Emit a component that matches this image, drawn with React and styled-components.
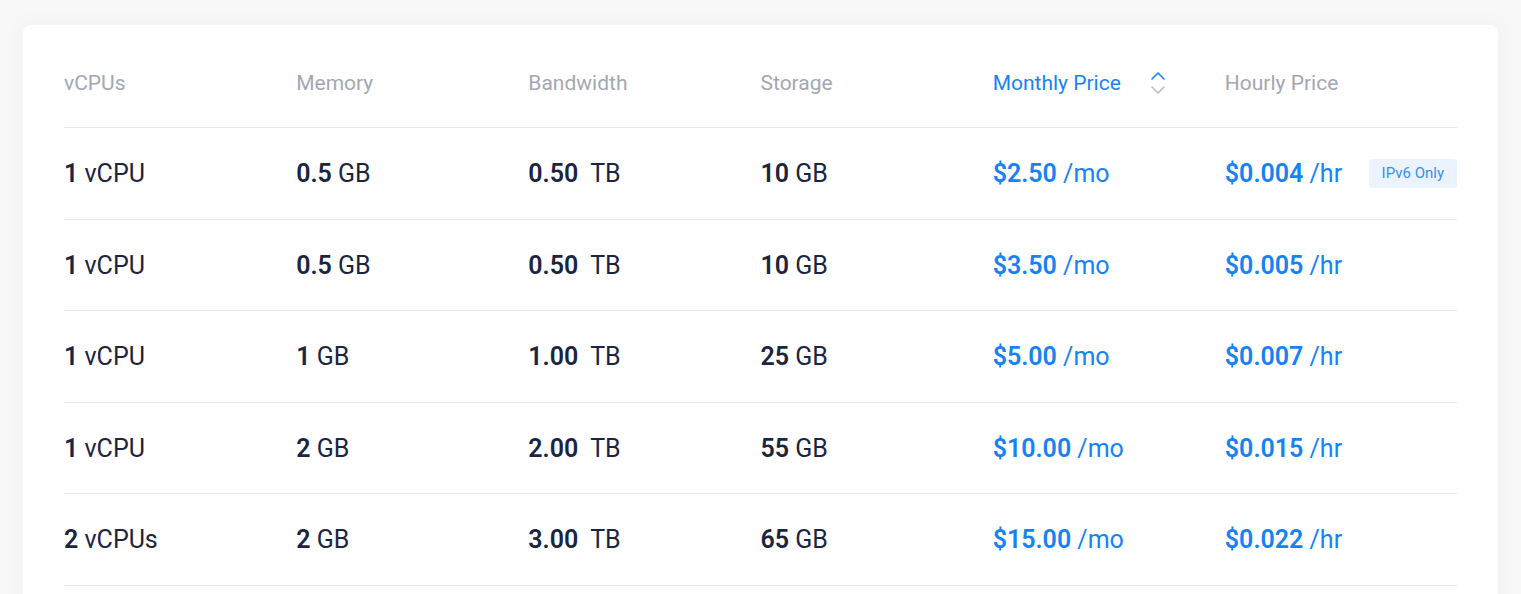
import React from "react";
import styled, { createGlobalStyle } from "styled-components";

const Global = createGlobalStyle`
  html, body { margin: 0; padding: 0; background: #f8f8f9; }
  body { font-family: Roboto, "Noto Sans", sans-serif; -webkit-font-smoothing: antialiased; }
`;

const Page = styled.div`
  padding: 25px 23px 0 23px;
  height: 594px;
  box-sizing: border-box;
  overflow: hidden;
`;

const Card = styled.div`
  background: #fff;
  border-radius: 8px;
  box-shadow: 0 0 24px rgba(0, 0, 0, 0.04);
  padding: 28px 41px 0 41px;
  height: 600px;
  box-sizing: border-box;
`;

const Row = styled.div`
  display: grid;
  grid-template-columns: repeat(6, 1fr);
  align-items: center;
  box-sizing: border-box;
  height: ${(p) => (p.$head ? "75px" : "91.5px")};
  border-bottom: 1.5px solid #e9eaf0;
`;

const HeadCell = styled.div`
  font-size: 21px;
  color: ${(p) => (p.$active ? "#1683f5" : "#a3a7b3")};
  display: flex;
  align-items: center;
  padding-bottom: 14px;
`;

const SortIcon = styled.svg`
  margin-left: 29px;
  width: 16px;
  height: 26px;
`;

const Cell = styled.div`
  font-size: 25px;
  color: ${(p) => (p.$price ? "#1683f5" : "#1b2540")};
  display: flex;
  align-items: center;
  justify-content: space-between;
  padding-top: 1px;
`;

const B = styled.b`
  font-weight: 600;
`;

const Badge = styled.span`
  font-size: 15px;
  color: #3a8df2;
  background: #ebf3ff;
  border-radius: 4px;
  padding: 5px 13px;
  line-height: 19px;
`;

const rows = [
  ["1", "vCPU", "0.5", "0.50", "10", "$2.50", "$0.004", true],
  ["1", "vCPU", "0.5", "0.50", "10", "$3.50", "$0.005"],
  ["1", "vCPU", "1", "1.00", "25", "$5.00", "$0.007"],
  ["1", "vCPU", "2", "2.00", "55", "$10.00", "$0.015"],
  ["2", "vCPUs", "2", "3.00", "65", "$15.00", "$0.022"],
];

export default function App() {
  return (
    <Page>
      <Global />
      <Card>
        <Row $head>
          <HeadCell>vCPUs</HeadCell>
          <HeadCell>Memory</HeadCell>
          <HeadCell>Bandwidth</HeadCell>
          <HeadCell>Storage</HeadCell>
          <HeadCell $active>
            Monthly Price
            <SortIcon viewBox="0 0 16 26" fill="none" strokeWidth="1.6" strokeLinecap="round" strokeLinejoin="round">
              <path d="M2 9 L8 3 L14 9" stroke="#1683f5" />
              <path d="M2 17 L8 23 L14 17" stroke="#b9bcc5" />
            </SortIcon>
          </HeadCell>
          <HeadCell>Hourly Price</HeadCell>
        </Row>
        {rows.map((r, i) => (
          <Row key={i}>
            <Cell>
              <span>
                <B>{r[0]}</B> {r[1]}
              </span>
            </Cell>
            <Cell>
              <span>
                <B>{r[2]}</B> GB
              </span>
            </Cell>
            <Cell>
              <span>
                <B>{r[3]}</B>&nbsp; TB
              </span>
            </Cell>
            <Cell>
              <span>
                <B>{r[4]}</B> GB
              </span>
            </Cell>
            <Cell $price>
              <span>
                <B>{r[5]}</B> /mo
              </span>
            </Cell>
            <Cell $price>
              <span>
                <B>{r[6]}</B> /hr
              </span>
              {r[7] && <Badge>IPv6 Only</Badge>}
            </Cell>
          </Row>
        ))}
      </Card>
    </Page>
  );
}
